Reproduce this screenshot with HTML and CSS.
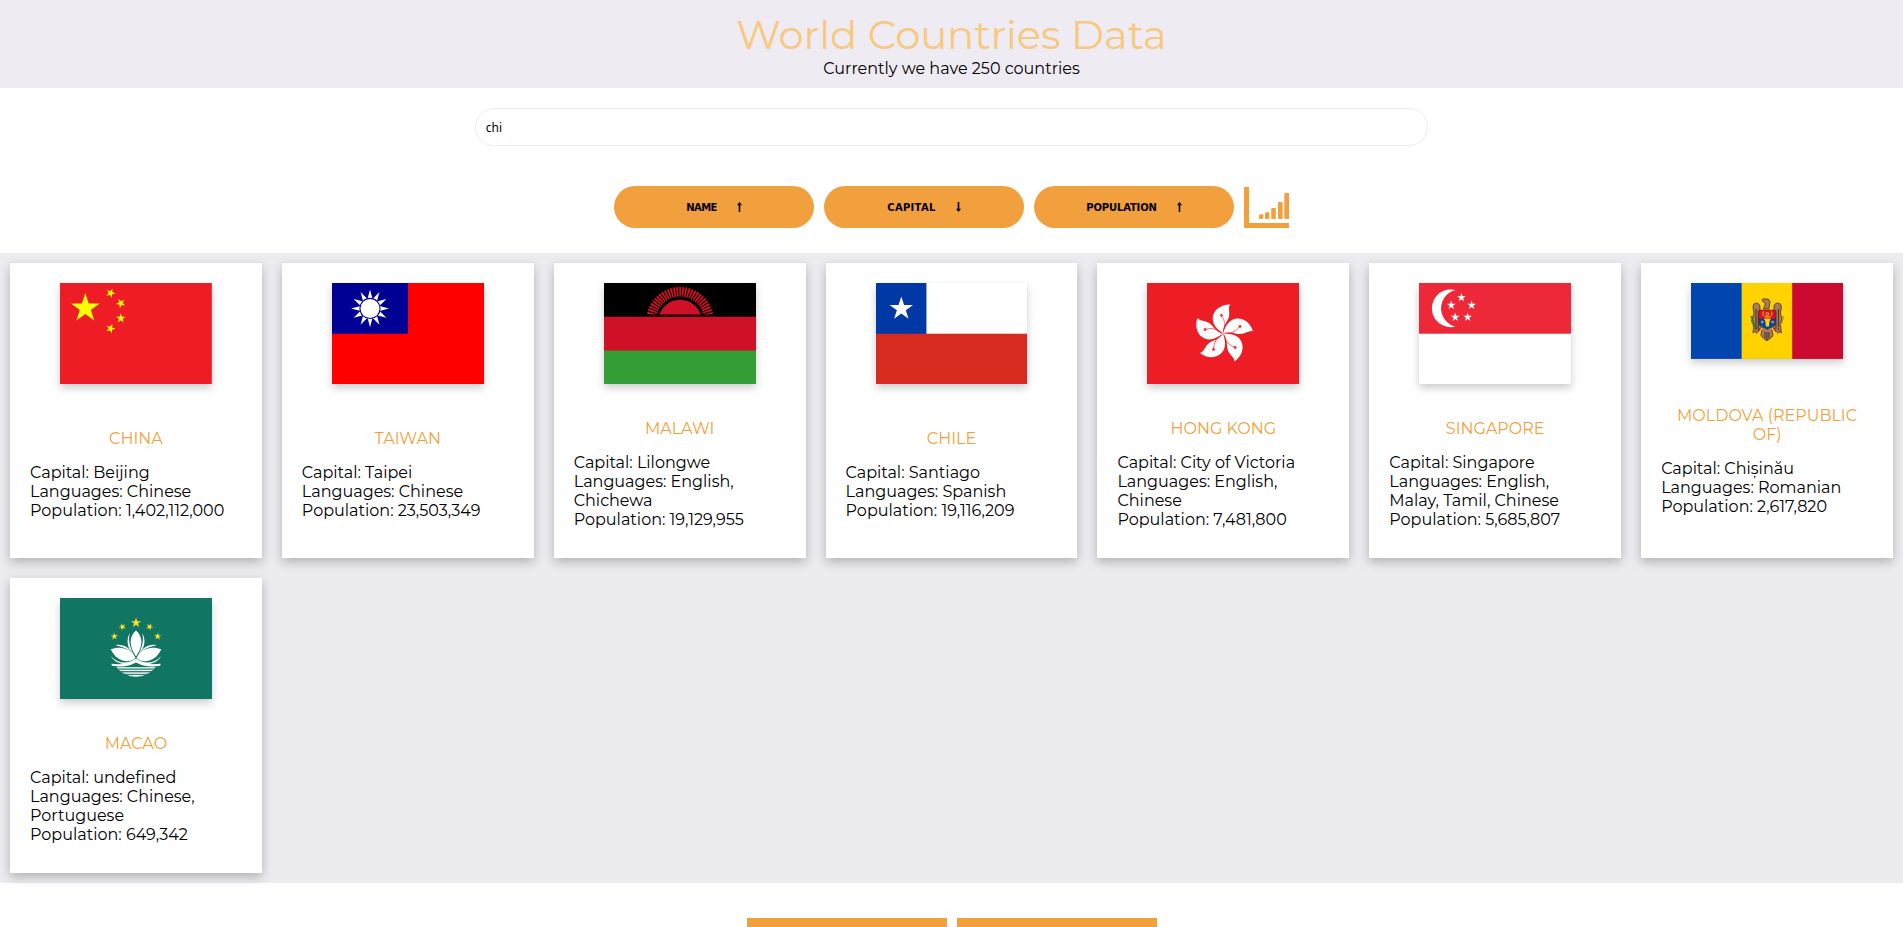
FILE: index.html
```
<!DOCTYPE html>
<html lang="en">
<head>
<meta charset="utf-8">
<title>World Countries Data</title>
<link rel="stylesheet" href="styles.css">
</head>
<body>
<svg class="defs" aria-hidden="true">
  <defs>
    <polygon id="star" points="0,-1 .5878,.809 -.9511,-.309 .9511,-.309 -.5878,.809"/>
    <g id="rays3">
      <path id="ray" d="M0,-18.9L5,0H-5Z"/>
      <use href="#ray" transform="rotate(30)"/>
      <use href="#ray" transform="rotate(60)"/>
    </g>
    <g id="petal">
      <path fill="#fff" d="M0,0C-4,-3 -11,-8 -10.3,-16C-9.5,-24 -2,-29.5 7.3,-29.2C4.6,-26.5 7,-22.5 6,-17C4.8,-11.5 -.5,-8.5 0,0Z"/>
      <path fill="none" stroke="#ee1c25" stroke-width=".6" d="M-.3,-1C3,-7 2,-13 -1.6,-18.3"/>
      <use href="#star" fill="#ee1c25" transform="translate(-1.6,-18.3) rotate(20) scale(2.3)"/>
    </g>
    <clipPath id="sunClip"><rect width="152" height="31.4"/></clipPath>
    <clipPath id="waterClip"><circle cx="76" cy="53.4" r="25.3"/></clipPath>
  </defs>
</svg>

<header class="header">
  <h1 class="title">World Countries Data</h1>
  <p class="subtitle">Currently we have 250 countries</p>
</header>

<section class="controls">
  <input class="search" type="text" value="chi" aria-label="Search countries">
  <div class="buttons">
    <button class="btn name">NAME<svg class="arrow" viewBox="0 0 5 10"><path d="M2.5 0L5 3.2H3.3V10H1.7V3.2H0Z"/></svg></button>
    <button class="btn capital">CAPITAL<svg class="arrow" viewBox="0 0 5 10"><path d="M2.5 10L0 6.8H1.7V0H3.3V6.8H5Z"/></svg></button>
    <button class="btn population">POPULATION<svg class="arrow" viewBox="0 0 5 10"><path d="M2.5 0L5 3.2H3.3V10H1.7V3.2H0Z"/></svg></button>
    <svg class="chart" viewBox="0 0 45 42">
      <path d="M0 1H5V37H45V42H0Z"/>
      <rect x="15" y="28.3" width="4.3" height="4.8" rx="1"/>
      <rect x="21" y="26.3" width="4.4" height="6.8" rx="1"/>
      <rect x="27.2" y="22" width="4.6" height="11.1" rx="1"/>
      <rect x="34" y="16" width="4.6" height="17.1" rx="1"/>
      <path d="M45 7H41.3a1 1 0 0 0-1 1V32.1a1 1 0 0 0 1 1H45Z"/>
    </svg>
  </div>
</section>

<main class="countries">
  <article class="card">
    <svg class="flag" viewBox="0 0 30 20">
      <rect width="30" height="20" fill="#ee1c25"/>
      <g fill="#ff0">
        <use href="#star" transform="translate(5,5) scale(3)"/>
        <use href="#star" transform="translate(10,2) rotate(23)"/>
        <use href="#star" transform="translate(12,4) rotate(45.9)"/>
        <use href="#star" transform="translate(12,7)"/>
        <use href="#star" transform="translate(10,9) rotate(20.7)"/>
      </g>
    </svg>
    <div class="info">
      <h2 class="country">CHINA</h2>
      <p>Capital: Beijing</p>
      <p>Languages: Chinese</p>
      <p>Population: 1,402,112,000</p>
    </div>
  </article>

  <article class="card">
    <svg class="flag" viewBox="0 0 151.8 101.2">
      <rect width="152" height="102" fill="#fe0000"/>
      <rect width="76" height="50.7" fill="#000095"/>
      <g transform="translate(38,25.4)" fill="#fff">
        <use href="#rays3"/>
        <use href="#rays3" transform="rotate(90)"/>
        <use href="#rays3" transform="rotate(180)"/>
        <use href="#rays3" transform="rotate(270)"/>
        <circle r="10.6" fill="#000095"/>
        <circle r="9.5"/>
      </g>
    </svg>
    <div class="info">
      <h2 class="country">TAIWAN</h2>
      <p>Capital: Taipei</p>
      <p>Languages: Chinese</p>
      <p>Population: 23,503,349</p>
    </div>
  </article>

  <article class="card">
    <svg class="flag" viewBox="0 0 151.8 101.2">
      <rect width="152" height="102" fill="#000"/>
      <rect y="33.7" width="152" height="68" fill="#ce1126"/>
      <rect y="67.5" width="152" height="34" fill="#339e35"/>
      <g clip-path="url(#sunClip)">
        <circle cx="76" cy="38.4" r="21.7" fill="#ce1126"/>
        <circle cx="76" cy="37.5" r="28.8" fill="none" stroke="#ce1126" stroke-width="9.6" stroke-dasharray="1.75 1.0"/>
      </g>
    </svg>
    <div class="info">
      <h2 class="country">MALAWI</h2>
      <p>Capital: Lilongwe</p>
      <p>Languages: English, Chichewa</p>
      <p>Population: 19,129,955</p>
    </div>
  </article>

  <article class="card">
    <svg class="flag" viewBox="0 0 151.8 101.2">
      <rect width="152" height="102" fill="#fff"/>
      <rect width="50.4" height="51" fill="#0039a6"/>
      <rect y="50.7" width="152" height="51" fill="#d72b1f"/>
      <use href="#star" fill="#fff" transform="translate(25.3,25.8) scale(12.3)"/>
    </svg>
    <div class="info">
      <h2 class="country">CHILE</h2>
      <p>Capital: Santiago</p>
      <p>Languages: Spanish</p>
      <p>Population: 19,116,209</p>
    </div>
  </article>

  <article class="card">
    <svg class="flag" viewBox="0 0 151.8 101.2">
      <rect width="152" height="102" fill="#ee1c25"/>
      <g transform="translate(76,50.6)">
        <use href="#petal"/>
        <use href="#petal" transform="rotate(72)"/>
        <use href="#petal" transform="rotate(144)"/>
        <use href="#petal" transform="rotate(216)"/>
        <use href="#petal" transform="rotate(288)"/>
      </g>
    </svg>
    <div class="info">
      <h2 class="country">HONG KONG</h2>
      <p>Capital: City of Victoria</p>
      <p>Languages: English, Chinese</p>
      <p>Population: 7,481,800</p>
    </div>
  </article>

  <article class="card">
    <svg class="flag" viewBox="0 0 151.8 101.2">
      <rect width="152" height="102" fill="#fff"/>
      <rect width="152" height="50.7" fill="#ed2939"/>
      <path fill="#fff" d="M36.5 7A18.9 18.9 0 1 0 36.5 43.6A18.8 18.8 0 0 1 36.5 7Z"/>
      <g fill="#fff">
        <use href="#star" transform="translate(42.4,14.6) scale(4.6)"/>
        <use href="#star" transform="translate(32.2,22.2) scale(4.6)"/>
        <use href="#star" transform="translate(52.6,22.2) scale(4.6)"/>
        <use href="#star" transform="translate(36.2,34.2) scale(4.6)"/>
        <use href="#star" transform="translate(48.6,34.2) scale(4.6)"/>
      </g>
    </svg>
    <div class="info">
      <h2 class="country">SINGAPORE</h2>
      <p>Capital: Singapore</p>
      <p>Languages: English, Malay, Tamil, Chinese</p>
      <p>Population: 5,685,807</p>
    </div>
  </article>

  <article class="card">
    <svg class="flag" viewBox="0 0 152 76">
      <rect width="152" height="76" fill="#0046ae"/>
      <rect x="50.7" width="102" height="76" fill="#ffd200"/>
      <rect x="101.3" width="51" height="76" fill="#cc092f"/>
      <g stroke="#3a2618" stroke-width=".7" stroke-linejoin="round">
        <path fill="#a77b5b" d="M71 16.8Q72 15.3 74 16Q78.5 15.3 79 18.5L78 26H72.5L74.5 20.5Q72 19.5 71 16.8Z"/>
        <path fill="#a77b5b" d="M69 27V23Q68 20 65.5 20Q62 20 62 24L63 30L61.5 36L63 41L62 50L64.5 48.5L66 51L70 45Z"/>
        <path fill="#a77b5b" d="M83 27V23Q84 20 86.5 20Q90.5 20 90.5 24L89.5 30L91 36L89.5 41L90.5 50L88 48.5L86.5 51L82 45Z"/>
        <path fill="#a77b5b" d="M71 44H81L82 53L79.5 55.5L76 57.8L72.5 55.5L70 53Z"/>
      </g>
      <path fill="none" stroke="#3a2618" stroke-width=".9" d="M65 26V47M67.3 28V46M87.5 26V47M85 28V46M74 49V55M76 49V57M78 49V55"/>
      <path stroke="#ffd200" stroke-width="1.8" d="M71 45L66.5 51M81 45L86 51"/>
      <path stroke="#cc092f" stroke-width="1.3" d="M69.5 45L67 49M82.5 45L85.5 49"/>
      <path fill="#0046ae" stroke="#3a2618" stroke-width=".5" d="M68 35.5H84.5V42Q80 44 76.3 46.5Q73 44 68 42Z"/>
      <path fill="#e0102c" stroke="#3a2618" stroke-width=".5" d="M68 27H84.5V36H68Z"/>
      <path fill="none" stroke="#ffd200" stroke-width="1" d="M72.5 28.5Q71 33.5 75 34H78Q82 33.5 80.5 28.5"/>
      <path fill="#ffd200" d="M73 35.5H80L78.5 38.5L78 43.5H75L74.5 38.5Z"/>
      <circle cx="76.5" cy="31" r="1.8" fill="#ffd200"/>
      <circle cx="76.5" cy="31" r=".9" fill="#e0102c"/>
      <circle cx="71.3" cy="39" r="1.3" fill="#d79b2c"/>
      <circle cx="81.7" cy="39" r="1.3" fill="#d79b2c"/>
      <path fill="none" stroke="#2c6b2c" stroke-width="2" stroke-dasharray="2.2 .8" d="M60.8 33Q60.5 43 67 46"/>
      <path fill="none" stroke="#a5791d" stroke-width="1.1" d="M92.5 33Q91 42 86 46"/>
    </svg>
    <div class="info">
      <h2 class="country">MOLDOVA (REPUBLIC OF)</h2>
      <p>Capital: Chișinău</p>
      <p>Languages: Romanian</p>
      <p>Population: 2,617,820</p>
    </div>
  </article>

  <article class="card">
    <svg class="flag" viewBox="0 0 151.8 101.2">
      <rect width="152" height="102" fill="#107562"/>
      <g fill="#ffe01f">
        <use href="#star" transform="translate(76,24.8) scale(5.3)"/>
        <use href="#star" transform="translate(62.4,28.8) rotate(-26) scale(3.8)"/>
        <use href="#star" transform="translate(89.6,28.8) rotate(26) scale(3.8)"/>
        <use href="#star" transform="translate(54.3,38.4) rotate(-4) scale(3.8)"/>
        <use href="#star" transform="translate(97.7,38.4) rotate(4) scale(3.8)"/>
      </g>
      <g fill="#fff">
        <path d="M76 32.5C82.8 38 83.5 48 76 58.5C68.5 48 69.2 38 76 32.5Z"/>
        <g id="lotusSide">
          <path d="M70 35C68.2 40 69 48 73.2 55.5C67.5 51 65.5 41.5 70 35Z"/>
          <path d="M50.7 51.3C60 47.5 72 50.5 75.5 60C69 66 56.5 64 50.7 51.3Z"/>
          <path d="M55.5 47.2C61 46 67 48 70.8 53C66 50 61 48.6 55.5 47.2Z"/>
          <path d="M51 58.3C58 66 68 66.5 76 60.5V63.5C68 68.2 56 67 51 58.3Z"/>
          <path d="M51.2 65.7C60 66.8 70 66 76 62.5V64.5C69 69 60 69 52 67.8Z"/>
        </g>
        <use href="#lotusSide" transform="translate(152,0) scale(-1,1)"/>
      </g>
      <g clip-path="url(#waterClip)" fill="#fff">
        <rect x="50" y="69.2" width="52" height="1.3"/>
        <rect x="50" y="71.7" width="52" height="1.4"/>
        <rect x="50" y="74.2" width="52" height="1.9" opacity=".8"/>
        <rect x="50" y="77" width="52" height="2"/>
      </g>
    </svg>
    <div class="info">
      <h2 class="country">MACAO</h2>
      <p>Capital: undefined</p>
      <p>Languages: Chinese, Portuguese</p>
      <p>Population: 649,342</p>
    </div>
  </article>
</main>

<footer class="footer">
  <div class="tab"></div>
  <div class="tab"></div>
</footer>
</body>
</html>
```
FILE: styles.css
```
* {
  box-sizing: border-box;
  margin: 0;
  padding: 0;
}

body {
  height: 927px;
  overflow: hidden;
  background: #fff;
  color: #000;
  font-family: Montserrat, Inter, sans-serif;
  font-size: 16px;
  line-height: 19px;
}

.defs {
  display: block;
  width: 0;
  height: 0;
}

.header {
  height: 88px;
  padding: 10px;
  background: #efebf2;
  text-align: center;
}

.title {
  color: #f8c87d;
  font-size: 40px;
  font-weight: 400;
  line-height: 49px;
}

.controls {
  display: flex;
  flex-direction: column;
  align-items: center;
  gap: 40px;
  padding: 20px 0 25px;
}

.search {
  width: calc(50% + 2px);
  height: 38px;
  padding: 0 10px;
  border: 1px solid #eeebf2;
  border-radius: 20px;
  outline: none;
  font-family: "Noto Sans", sans-serif;
  font-size: 12px;
}

.buttons {
  display: flex;
  gap: 10px;
}

.btn {
  display: flex;
  align-items: center;
  justify-content: center;
  gap: 20px;
  width: 200px;
  height: 42px;
  border: none;
  border-radius: 21px;
  background: #f29f3d;
  color: #000;
  font-family: "DejaVu Sans", sans-serif;
  font-size: 10px;
  font-weight: 700;
}

.name {
  letter-spacing: -0.6px;
}

.capital {
  letter-spacing: 0.3px;
}

.population {
  letter-spacing: -0.15px;
}

.arrow {
  width: 5px;
  height: 10px;
}

.chart {
  width: 45px;
  height: 42px;
  fill: #f29f3d;
}

.countries {
  display: grid;
  grid-template-columns: repeat(7, 1fr);
  grid-auto-rows: 295px;
  gap: 20px;
  padding: 10px;
  background: #ecebef;
}

.card {
  display: flex;
  flex-direction: column;
  min-width: 0;
  padding: 20px;
  background: #fff;
  box-shadow: 0 4px 10px rgba(0, 0, 0, 0.25);
}

.flag {
  display: block;
  flex: none;
  width: calc(100% - 60px);
  margin: 0 auto;
  box-shadow: 0 4px 8px rgba(0, 0, 0, 0.2);
}

.info {
  display: flex;
  flex: 1;
  flex-direction: column;
  justify-content: center;
  padding-top: 26px;
}

.country {
  margin-bottom: 15px;
  color: #f29f3d;
  font-size: 16px;
  font-weight: 400;
  text-align: center;
}

.footer {
  display: flex;
  justify-content: center;
  gap: 10px;
  padding-top: 35px;
}

.tab {
  width: 200px;
  height: 42px;
  background: #f29f3d;
}
```
